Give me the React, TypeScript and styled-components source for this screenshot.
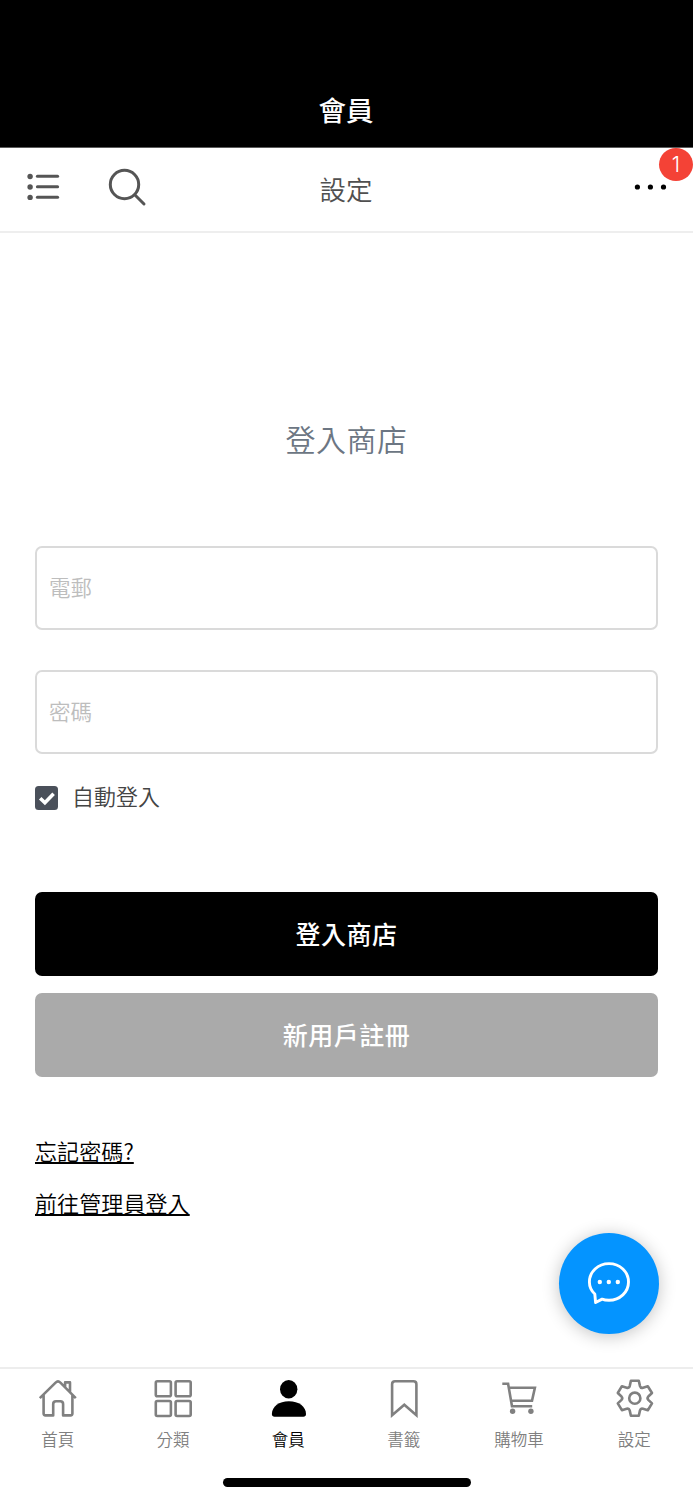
import React from "react";
import styled, { createGlobalStyle } from "styled-components";

const GlobalStyle = createGlobalStyle`
  * { box-sizing: border-box; }
  body {
    margin: 0;
    background: #fff;
    font-family: "Noto Sans CJK TC", sans-serif;
    font-weight: 350;
  }
  button, input { font-family: inherit; }
`;

const Screen = styled.div`
  width: 693px;
  height: 1500px;
  display: flex;
  flex-direction: column;
  background: #fff;
  overflow: hidden;
`;

const AppHeader = styled.header`
  height: 148px;
  flex: none;
  display: flex;
  align-items: flex-end;
  justify-content: center;
  padding: 0 1px 18px 0;
  background: #000;
  border-bottom: 1px solid #5c5c5c;
`;

const AppTitle = styled.h1`
  margin: 0;
  font-size: 27.5px;
  line-height: 40px;
  font-weight: 500;
  color: #fff;
`;

const Toolbar = styled.div`
  position: relative;
  height: 85px;
  flex: none;
  display: grid;
  grid-template-columns: 1fr auto 1fr;
  border-bottom: 2px solid #eee;
`;

const ToolGroup = styled.div`
  display: flex;
  align-items: flex-start;
  gap: 46px;
  padding: 19px 0 0 25px;
`;

const ToolTitle = styled.h2`
  margin: 0;
  padding: 21px 1px 0 0;
  font-size: 26.5px;
  line-height: 40px;
  font-weight: 350;
  color: #505050;
`;

const MoreGroup = styled.div`
  display: flex;
  justify-content: flex-end;
  align-items: flex-start;
  padding: 35px 26px 0 0;
`;

const Badge = styled.span`
  position: absolute;
  top: 0;
  right: 0;
  width: 34px;
  height: 33px;
  border-radius: 50%;
  background: #f44236;
  color: #fff;
  font: 350 21px/33px Inter, sans-serif;
  text-align: center;
`;

const IconButton = styled.button`
  display: flex;
  padding: 0;
  border: 0;
  background: none;
`;

const Main = styled.main`
  flex: 1;
  padding: 182px 35px 0;
`;

const FormTitle = styled.h3`
  margin: 0 0 85px;
  text-align: center;
  font-size: 30px;
  line-height: 46px;
  letter-spacing: 0.5px;
  font-weight: 350;
  color: #6c7683;
`;

const Field = styled.input`
  display: block;
  width: 100%;
  height: 84px;
  margin: 0 0 40px;
  padding: 0 12px 4px;
  border: 2px solid #dadada;
  border-radius: 7px;
  background: #fff;
  font-size: 21.5px;
  font-weight: 350;
  outline: 0;
  &::placeholder { color: #bdbdbd; opacity: 1; }
`;

const RememberRow = styled.label`
  display: flex;
  align-items: center;
  gap: 14px;
  height: 32px;
  margin-top: -15px;
  font-size: 22px;
  line-height: 32px;
  color: #444;
`;

const CheckBox = styled.span`
  display: flex;
  width: 23px;
  height: 24px;
  margin-top: 5px;
  border-radius: 3.5px;
  background: #4a505a;
`;

const Actions = styled.div`
  display: flex;
  flex-direction: column;
  gap: 17px;
  margin-top: 81px;
`;

const ActionButton = styled.button<{ $color: string }>`
  height: 84px;
  padding: 0 0 2px;
  border: 0;
  border-radius: 7px;
  background: ${(p) => p.$color};
  color: #fff;
  font-size: 25px;
  letter-spacing: 0.5px;
  font-weight: 450;
`;

const Links = styled.nav`
  display: flex;
  flex-direction: column;
  align-items: flex-start;
  gap: 20px;
  margin-top: 57px;
`;

const TextLink = styled.a`
  font-size: 22px;
  line-height: 32px;
  letter-spacing: 0.1px;
  color: #000;
  text-decoration: underline;
  text-decoration-thickness: 1.5px;
  text-underline-offset: 2px;
  text-decoration-skip-ink: none;
`;

const ChatButton = styled.button`
  position: absolute;
  left: 559px;
  top: 1233px;
  width: 100px;
  height: 101px;
  padding: 0;
  border: 0;
  border-radius: 50%;
  background: #0494ff;
  box-shadow: 0 2px 17px rgba(0, 0, 0, 0.24);
`;

const BottomBar = styled.footer`
  height: 133px;
  flex: none;
  border-top: 2px solid #ededed;
  background: #fff;
`;

const Tabs = styled.nav`
  display: grid;
  grid-template-columns: repeat(6, 1fr);
  height: 109px;
  margin-right: 1px;
`;

const Tab = styled.a<{ $active?: boolean }>`
  display: flex;
  flex-direction: column;
  align-items: center;
  padding-top: 9px;
  color: ${(p) => (p.$active ? "#000" : "#808080")};
  font-size: 16.5px;
  line-height: 24px;
  svg { margin-bottom: 9px; }
`;

const HomeIndicator = styled.div`
  width: 248px;
  height: 9px;
  margin: 0 auto;
  border-radius: 5px;
  background: #000;
`;

const ListIcon = () => (
  <svg width="36" height="40" viewBox="25 167 36 40" fill="#555">
    {[176.5, 187, 197.4].map((y) => (
      <g key={y}>
        <circle cx="30.1" cy={y} r="2.7" />
        <path d={`M37.4 ${y - 0.2}H57.6`} stroke="#555" strokeWidth="3" strokeLinecap="round" />
      </g>
    ))}
  </svg>
);

const SearchIcon = () => (
  <svg width="42" height="42" viewBox="107 167 42 42" fill="none" stroke="#555" strokeWidth="3" strokeLinecap="round">
    <circle cx="124.5" cy="184.5" r="14.2" />
    <path d="M135 195l9 9" />
  </svg>
);

const MoreIcon = () => (
  <svg width="33" height="8" viewBox="634 183 33 8">
    {[637.4, 650.4, 663.5].map((x) => <circle key={x} cx={x} cy="187" r="2.6" />)}
  </svg>
);

const ChatIcon = () => (
  <svg width="100" height="101" viewBox="559 1233 100 101" fill="none" stroke="#fff" strokeWidth="2.9" strokeLinejoin="round">
    <path d="M594.8 1294C591.5 1291 589.4 1286.5 589.4 1282C589.4 1272 598 1263.6 609 1263.6S628.5 1272 628.5 1282S620 1300.2 609 1300.2C606.4 1300.2 604 1299.9 602.1 1299.1L595.6 1302.5Z" />
    <g fill="#fff" stroke="none">
      <circle cx="599.8" cy="1282" r="2.2" />
      <circle cx="608.8" cy="1282" r="2.2" />
      <circle cx="617.8" cy="1282" r="2.2" />
    </g>
  </svg>
);

const tabIcons = {
  home: (
    <g transform="translate(0.8 0)">
      <path d="M2 19.1L17.8 3.6Q20.2 1.2 22.6 3.6L38 19.1M5.8 16V34.6Q5.8 36.4 7.6 36.4H15.4V25Q15.4 22.2 18.2 22.2H22.5Q25.3 22.2 25.3 25V36.4H32.8Q34.6 36.4 34.6 34.6V16M27.3 8V3.4H32.2V13" />
    </g>
  ),
  grid: (
    <g transform="translate(0.8 0)">
      <rect x="3" y="2.2" width="15.1" height="15.1" rx="1.5" />
      <rect x="22.8" y="2.2" width="15.1" height="15.1" rx="1.5" />
      <rect x="3" y="22" width="15.1" height="15" rx="1.5" />
      <rect x="22.8" y="22" width="15.1" height="15" rx="1.5" />
    </g>
  ),
  user: (
    <g fill="currentColor" stroke="none">
      <ellipse cx="20.7" cy="10.2" rx="8.7" ry="9.2" />
      <path d="M3.9 35C3.9 27.5 11 22.2 20.9 22.2S38 27.5 38 35Q38 37.7 35.3 37.7H6.6Q3.9 37.7 3.9 35Z" />
    </g>
  ),
  bookmark: <path strokeLinejoin="miter" d="M9.1 36.2V5.2Q9.1 2.3 12 2.3H30.5Q33.4 2.3 33.4 5.2V36.2L21.3 25.7Z" />,
  cart: (
    <g transform="translate(0.8 0)">
      <path strokeLinejoin="miter" d="M3.5 4.7H9.3L13.2 27.2H33.4M10 8.7H36.1L33.2 21.7H12.2" />
      <circle cx="13.8" cy="32.2" r="2.7" fill="currentColor" stroke="none" />
      <circle cx="32.1" cy="32.2" r="2.7" fill="currentColor" stroke="none" />
    </g>
  ),
  gear: (
    <g>
      <circle cx="20.8" cy="19.2" r="5.6" />
      <path d="M16.9 1.8H24.8L26 7.1Q26.7 9.4 29 8.7L33.8 7.2L38 14L34.3 17.5Q32.8 19.2 34.3 20.9L38 24.4L33.8 31.2L29 29.8Q26.7 29.1 26 31.4L24.8 36.7H16.9L15.7 31.4Q15 29.1 12.7 29.8L7.9 31.2L3.8 24.4L7.5 20.9Q9 19.2 7.5 17.5L3.8 14L7.9 7.2L12.7 8.7Q15 9.4 15.7 7.1Z" />
    </g>
  ),
};

const tabs: { icon: keyof typeof tabIcons; label: string; active?: boolean }[] = [
  { icon: "home", label: "首頁" },
  { icon: "grid", label: "分類" },
  { icon: "user", label: "會員", active: true },
  { icon: "bookmark", label: "書籤" },
  { icon: "cart", label: "購物車" },
  { icon: "gear", label: "設定" },
];

export default function App() {
  return (
    <Screen>
      <GlobalStyle />
      <AppHeader><AppTitle>會員</AppTitle></AppHeader>
      <Toolbar>
        <ToolGroup>
          <IconButton aria-label="選單"><ListIcon /></IconButton>
          <IconButton aria-label="搜尋"><SearchIcon /></IconButton>
        </ToolGroup>
        <ToolTitle>設定</ToolTitle>
        <MoreGroup>
          <IconButton aria-label="更多"><MoreIcon /></IconButton>
        </MoreGroup>
        <Badge>1</Badge>
      </Toolbar>
      <Main>
        <FormTitle>登入商店</FormTitle>
        <Field type="email" placeholder="電郵" />
        <Field type="password" placeholder="密碼" />
        <RememberRow>
          <CheckBox>
            <svg width="23" height="24" viewBox="0 0 23 24" fill="none" stroke="#fff" strokeWidth="3.6">
              <path d="M5.2 12.2L9.9 16.7L18.6 7.8" />
            </svg>
          </CheckBox>
          自動登入
        </RememberRow>
        <Actions>
          <ActionButton $color="#000">登入商店</ActionButton>
          <ActionButton $color="#aaa">新用戶註冊</ActionButton>
        </Actions>
        <Links>
          <TextLink>忘記密碼?</TextLink>
          <TextLink>前往管理員登入</TextLink>
        </Links>
      </Main>
      <BottomBar>
        <Tabs>
          {tabs.map((t) => (
            <Tab key={t.icon} $active={t.active}>
              <svg width="41" height="40" viewBox="0 -1 41 40" fill="none" stroke="currentColor" strokeWidth="2.6" strokeLinejoin="round">
                {tabIcons[t.icon]}
              </svg>
              {t.label}
            </Tab>
          ))}
        </Tabs>
        <HomeIndicator />
      </BottomBar>
      <ChatButton aria-label="聊天"><ChatIcon /></ChatButton>
    </Screen>
  );
}
